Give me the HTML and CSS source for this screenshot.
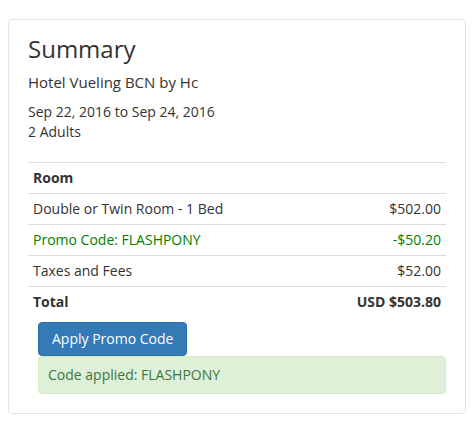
FILE: index.html
```html
<!DOCTYPE html>
<html>
<head>
<meta charset="utf-8">
<link rel="stylesheet" href="styles.css">
</head>
<body>
<div class="card">
  <h3 class="title">Summary</h3>
  <div class="hotel">Hotel Vueling BCN by Hc</div>
  <div class="dates">Sep 22, 2016 to Sep 24, 2016<br>2 Adults</div>
  <table class="summary">
    <tr><th>Room</th><th></th></tr>
    <tr><td>Double or Twin Room - 1 Bed</td><td class="amt">$502.00</td></tr>
    <tr class="promo"><td>Promo Code: FLASHPONY</td><td class="amt">-$50.20</td></tr>
    <tr><td>Taxes and Fees</td><td class="amt">$52.00</td></tr>
    <tr><th>Total</th><th class="amt">USD $503.80</th></tr>
  </table>
  <div class="promo-block">
    <button class="btn">Apply Promo Code</button>
    <div class="alert">Code applied: FLASHPONY</div>
  </div>
</div>
</body>
</html>
```
FILE: styles.css
```css
html, body {
  margin: 0;
  padding: 0;
  background: #fff;
}
body {
  padding: 19px 6px 0 8px;
  font-family: "Open Sans", "Liberation Sans", sans-serif;
  font-size: 14px;
  line-height: 20px;
  color: #333;
}
.card {
  width: 458px;
  box-sizing: border-box;
  border: 1px solid #e3e3e3;
  border-radius: 4px;
  padding: 14px 19px 19px 19px;
}
.title {
  margin: 0;
  font-size: 24px;
  font-weight: 400;
  line-height: 30px;
}
.hotel {
  font-size: 15px;
  margin-top: 8px;
  line-height: 20px;
}
.dates {
  font-size: 14px;
  margin-top: 10px;
  line-height: 20px;
}
.summary {
  width: 100%;
  border-collapse: collapse;
  margin-top: 20px;
  font-size: 14px;
}
.summary th, .summary td {
  padding: 5px;
  line-height: 20px;
  border-top: 1px solid #ddd;
  text-align: left;
}
.summary th {
  font-weight: 700;
}
.summary .amt {
  text-align: right;
}
.summary .promo td {
  color: #008000;
}
.promo-block {
  margin-top: 5px;
  padding: 0 0 0 10px;
}
.btn {
  display: block;
  font-family: inherit;
  font-size: 14px;
  line-height: 20px;
  padding: 6px 13px;
  color: #fff;
  background: #337ab7;
  border: 1px solid #2e6da4;
  border-radius: 4px;
}
.alert {
  padding: 8px 9px;
  background: #dff0d8;
  border: 1px solid #d6e9c6;
  border-radius: 4px;
  color: #3c763d;
  line-height: 20px;
}
```
